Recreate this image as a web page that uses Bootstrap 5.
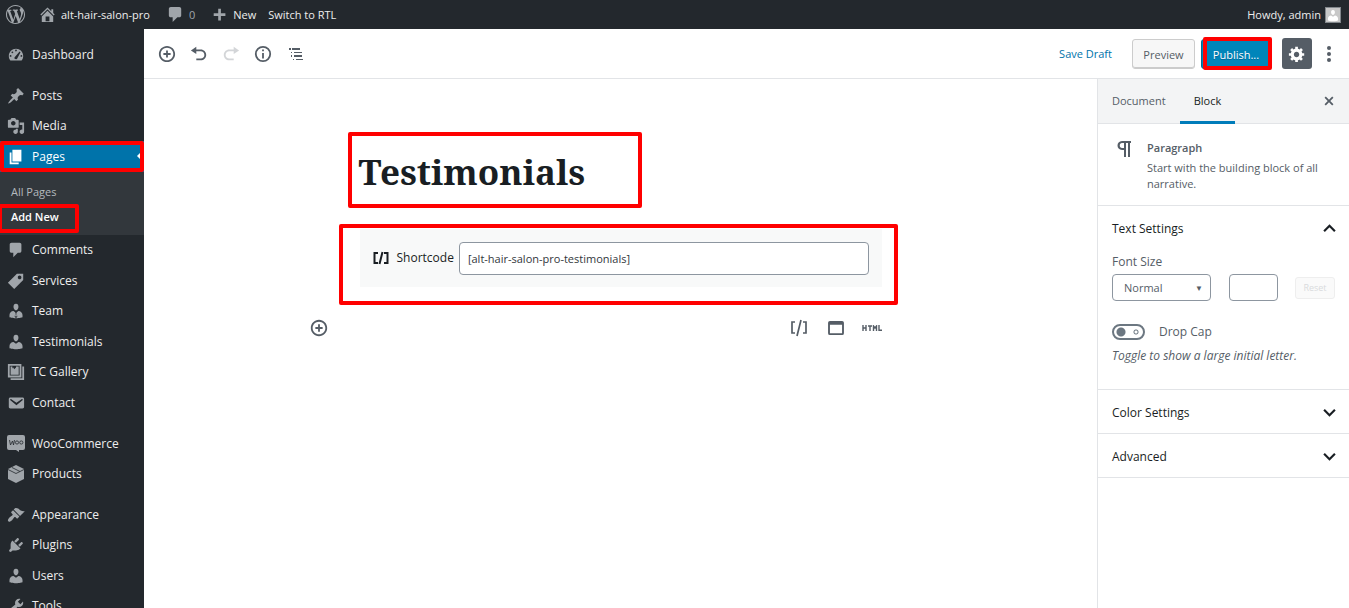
<!DOCTYPE html>
<html lang="en">
<head>
<meta charset="utf-8">
<meta name="viewport" content="width=device-width, initial-scale=1">
<title>Add New Page</title>
<link href="https://cdn.jsdelivr.net/npm/bootstrap@5.3.0/dist/css/bootstrap.min.css" rel="stylesheet">
<style>
  body { font: 12px/16px "Open Sans", "Noto Sans", sans-serif; color: #191e23; background: #fff; }
  a { text-decoration: none; }
  svg { fill: currentColor; flex: none; display: block; }
  button { border: 0; background: none; padding: 0; color: #555d66; }
  .fine { font-size: 11px; }

  .adminbar { height: 29px; background: #23282d; color: #eee; padding: 0 8px 0 5px; font-size: 11px; }
  .adminbar a { color: #eee; }
  .adminbar a.quiet, .adminbar svg { color: #a0a5aa; }
  .avatar { width: 16px; height: 16px; background: #c8c8c8; border: 1px solid #82878c; overflow: hidden; }
  .adminbar .avatar svg { color: #fff; }

  .side { width: 144px; background: #23282d; overflow: hidden; padding-top: 10px; flex: none; }
  .side ul { list-style: none; margin: 0 0 10px; padding: 0; }
  .side-link { display: flex; align-items: center; gap: 7px; height: 30px; padding-left: 7px; color: #eee; }
  .side li:nth-child(odd) > .side-link { height: 31px; }
  .side svg { color: #a0a5aa; }
  .side .side-link.current { background: #0073aa; color: #fff; position: relative; }
  .side .current svg { color: #fff; }
  .current::after { content: ""; position: absolute; right: 0; top: 8px; border: 7px solid transparent; border-right-color: #fff; }
  .side .submenu { background: #32373c; margin: 0; padding: 7px 0 6px; }
  .submenu a { display: flex; align-items: center; height: 25px; padding-left: 11px; color: #b4b9be; font-size: 11px; }
  .submenu a.here { color: #fff; font-weight: 600; position: relative; }

  /* red call-outs */
  .callout { border: 4px solid #f00; border-radius: 2px; }
  .callout-over { position: absolute; inset: 0; pointer-events: none; z-index: 2; }
  .callout-here { inset: 0 auto -4px -2px; width: 81px; }
  .callout-publish { inset: -3px -2px -2px 1px; }

  .edit-head { height: 50px; border-bottom: 1px solid #e2e4e7; padding: 0 11px 0 14px; }
  .edit-head svg { color: #555d66; }
  .tools { gap: 14px; }
  .head-btn { height: 30px; border-radius: 3px; font-size: 11px; padding-top: 2px; }
  .preview { width: 63px; border: 1px solid #ccc; background: #f7f7f7; box-shadow: inset 0 -1px 0 #ccc; margin: 0 6px 0 20px; }
  .publish { position: relative; width: 70px; background: #0085ba; color: #fff; border: 1px solid #006a95; text-shadow: 0 1px 0 #006799; margin-right: 11px; }
  .gear { width: 30px; height: 31px; background: #555d66; border-radius: 3px; }
  .edit-head .gear svg { color: #fff; }

  .column { width: 522px; max-width: 100%; margin: 53px auto 0; }
  .title-box { width: 294px; height: 76px; margin: 0 0 16px -12px; padding: 4px 0 0 7px; }
  .title-box h1 { font: bold 35px/50px "Noto Serif", "DejaVu Serif Condensed", "DejaVu Serif", serif; margin: 0; }
  .code-box { height: 81px; margin: 0 -16px 0 -21px; padding: 1px 12px 0 17px; }
  .code-block { height: 58px; background: #f8f9f9; padding: 0 13px; }
  .code-block label { margin: 0 5px 0 8px; }
  .code-block input { height: 33px; border: 1px solid #8d96a0; border-radius: 4px; padding: 0 8px; color: #32373c; min-width: 0; font-size: 11px; }
  .inserter { margin: 13px 0 0 -51px; color: #555d66; }
  .inserter .middle { margin: 0 18px 0 20px; }

  .panel-side { width: 252px; flex: none; border-left: 1px solid #e2e4e7; color: #555d66; }
  .tabs { height: 45px; background: #f3f4f5; border-bottom: 1px solid #e2e4e7; padding-right: 11px; }
  .tabs .tab { height: 45px; padding: 3px 14px 0; color: #555d66; border-bottom: 3px solid transparent; font-size: 11px; }
  .tabs .tab.on { color: #191e23; border-bottom-color: #007cba; }
  .about { height: 82px; border-bottom: 1px solid #e2e4e7; padding: 16px 12px 0 18px; gap: 15px; }
  .sect { border-bottom: 1px solid #e2e4e7; }
  .sect-toggle { width: 100%; height: 43px; padding: 2px 13px 0 14px; color: #191e23; }
  .sect-body { padding: 5px 14px 25px; }
  .field { border: 1px solid #8d96a0; border-radius: 4px; height: 27px; background: #fff; color: #555d66; }
  .size-pick { width: 99px; padding: 0 11px; appearance: none; font-size: 11px; }
  .size-wrap { position: relative; }
  .size-wrap span { position: absolute; right: 8px; top: 6px; font-size: 8px; pointer-events: none; }
  .size-num { width: 49px; }
  .reset { width: 40px; height: 22px; border: 1px solid #eee; border-radius: 3px; background: #fafafa; color: #d9dbdd; font-size: 9px; }
  .drop-row { margin: 23px 0 8px; gap: 14px; }
  .toggle { appearance: none; width: 33px; height: 16px; margin: 0; border: 2px solid #6c7781; border-radius: 8px;
    background: radial-gradient(circle at 7px 6px, #6c7781 4px, transparent 5px), radial-gradient(circle at 22px 6px, transparent 1px, #6c7781 2px, transparent 3px); }
</style>
</head>
<body class="vh-100 overflow-hidden d-flex flex-column">

<svg class="d-none">
  <symbol id="i-user" viewBox="0 0 20 20"><path d="M10 9.250c-2.270 0-2.730-3.440-2.730-3.440C7 4.020 7.820 2 9.970 2c2.160 0 2.980 2.020 2.710 3.810 0 0-.41 3.440-2.680 3.440zm0 2.570L12.720 10c2.390 0 4.520 2.330 4.520 4.530v2.490s-3.650 1.130-7.240 1.130c-3.650 0-7.240-1.130-7.240-1.130v-2.490c0-2.250 1.940-4.480 4.470-4.480z"/></symbol>
  <symbol id="i-comment" viewBox="0 0 20 20"><path d="M5 2h9c1.100 0 2 .9 2 2v7c0 1.100-.9 2-2 2h-2l-5 5v-5H5c-1.100 0-2-.9-2-2V4c0-1.100.9-2 2-2z"/></symbol>
  <symbol id="i-insert" viewBox="0 0 20 20"><path d="M10 1c-5 0-9 4-9 9s4 9 9 9 9-4 9-9-4-9-9-9zm0 16c-3.900 0-7-3.100-7-7s3.100-7 7-7 7 3.100 7 7-3.100 7-7 7zm1-11H9v3H6v2h3v3h2v-3h3V9h-3V6z"/></symbol>
  <symbol id="i-down" viewBox="0 0 12 12"><path d="M1 3.500l5 5 5-5" fill="none" stroke="currentColor" stroke-width="2"/></symbol>
</svg>

<header class="adminbar d-flex align-items-center flex-shrink-0">
  <a href="#" aria-label="WordPress"><svg width="21" height="21" viewBox="-1 -1 22 22"><path d="M20 10c0-5.510-4.490-10-10-10C4.480 0 0 4.490 0 10c0 5.520 4.480 10 10 10 5.510 0 10-4.480 10-10zM7.780 15.370L4.370 6.220c.55-.02 1.170-.08 1.170-.08.5-.06.44-1.130-.06-1.110 0 0-1.450.11-2.370.11-.18 0-.37 0-.58-.01C4.120 2.690 6.870 1.110 10 1.110c2.330 0 4.450.87 6.050 2.340-.68-.11-1.650.39-1.650 1.580 0 .74.45 1.360.9 2.100.35.610.55 1.360.55 2.460 0 1.490-1.400 5-1.400 5l-3.030-8.370c.54-.02.82-.17.82-.17.5-.05.44-1.250-.06-1.220 0 0-1.440.12-2.380.12-.87 0-2.330-.12-2.330-.12-.5-.03-.56 1.200-.06 1.220l.92.08 1.260 3.410zM17.410 10c.24-.64.74-1.870.43-4.250.7 1.290 1.050 2.710 1.050 4.250 0 3.290-1.730 6.240-4.400 7.780.97-2.590 1.940-5.200 2.920-7.780zM6.100 18.090C3.120 16.650 1.110 13.530 1.110 10c0-1.300.23-2.480.72-3.590C3.250 10.300 4.670 14.200 6.100 18.090zm4.030-6.630l2.580 6.980c-.86.29-1.760.45-2.710.45-.79 0-1.570-.11-2.290-.33.81-2.380 1.620-4.740 2.420-7.100z"/></svg></a>
  <a href="#" class="d-flex align-items-center ms-2 ps-1 gap-1"><svg width="19" height="19" viewBox="0 0 20 20"><path d="M16 8.500l1.530 1.530-1.060 1.060L10 4.600l-6.470 6.490-1.060-1.060L10 2.500l4 4v-2h2v4zm-6-2.460l6 5.990V18H4v-5.970zM12 17v-5H8v5h4z"/></svg>alt-hair-salon-pro</a>
  <a href="#" class="quiet d-flex align-items-center ms-3 gap-1"><svg width="19" height="19"><use href="#i-comment"/></svg>0</a>
  <a href="#" class="d-flex align-items-center ms-3 gap-1"><svg width="18" height="18" viewBox="1 -1 20 20"><path d="M17 7v3h-5v5H9v-5H4V7h5V2h3v5h5z"/></svg>New</a>
  <a href="#" class="ms-2 ps-1">Switch to RTL</a>
  <a href="#" class="d-flex align-items-center ms-auto gap-1">Howdy, admin <span class="avatar"><svg width="14" height="15"><use href="#i-user"/></svg></span></a>
</header>

<div class="d-flex flex-grow-1 overflow-hidden">
  <nav class="side" aria-label="Main menu">
    <ul>
      <li><a href="#" class="side-link"><svg width="18" height="18" viewBox="0 0 20 20"><path fill-rule="evenodd" d="M3.760 16h12.480c1.100-1.370 1.760-3.110 1.760-5 0-4.420-3.580-8-8-8s-8 3.580-8 8c0 1.890.66 3.630 1.760 5zM10 4c.55 0 1 .45 1 1s-.45 1-1 1-1-.45-1-1 .45-1 1-1zM6 6c.55 0 1 .45 1 1s-.45 1-1 1-1-.45-1-1 .45-1 1-1zm8 0l1 1-3.500 6.500c-.4 1.500-3 1.500-3.300-.2 0-.8.5-1.300 1-1.700zM4 10c.55 0 1 .45 1 1s-.45 1-1 1-1-.45-1-1 .45-1 1-1zm12 0c.55 0 1 .45 1 1s-.45 1-1 1-1-.45-1-1 .45-1 1-1z"/></svg>Dashboard</a></li>
    </ul>
    <ul>
      <li><a href="#" class="side-link"><svg width="18" height="18" viewBox="0 0 20 20"><path d="M10.440 3.020l1.820-1.820 6.360 6.350-1.830 1.820c-1.050-.68-2.480-.57-3.410.36l-.75.75c-.92.930-1.040 2.350-.35 3.410l-1.830 1.820-2.410-2.410-2.800 2.790c-.42.420-3.380 2.710-3.800 2.290s1.860-3.390 2.280-3.810l2.790-2.790L4.100 9.360l1.830-1.820c1.050.69 2.480.57 3.400-.36l.75-.75c.93-.92 1.050-2.350.36-3.410z"/></svg>Posts</a></li>
      <li><a href="#" class="side-link"><svg width="18" height="18" viewBox="0 0 20 20"><path d="M13 11V4c0-.55-.45-1-1-1h-1.670L9 1H5L3.670 3H2c-.55 0-1 .45-1 1v7c0 .55.45 1 1 1h10c.55 0 1-.45 1-1zM7 4.500c1.380 0 2.500 1.120 2.500 2.500S8.380 9.500 7 9.500 4.500 8.380 4.500 7 5.620 4.500 7 4.500zM14 6h5v10.500c0 1.380-1.120 2.500-2.500 2.500S14 17.880 14 16.500s1.120-2.500 2.500-2.500c.17 0 .34.020.5.050V9h-3V6zm-4 8.050V13h2v3.500c0 1.380-1.120 2.500-2.500 2.500S7 17.880 7 16.500 8.120 14 9.500 14c.17 0 .34.020.5.050z"/></svg>Media</a></li>
      <li>
        <a href="#" class="side-link current"><svg width="18" height="18" viewBox="0 0 20 20"><path d="M6 15V2h10v13H6zm-1 1h8v2H3V5h2v11z"/></svg>Pages<span class="callout callout-over"></span></a>
        <ul class="submenu">
          <li><a href="#">All Pages</a></li>
          <li><a href="#" class="here">Add New<span class="callout callout-over callout-here"></span></a></li>
        </ul>
      </li>
      <li><a href="#" class="side-link"><svg width="18" height="18"><use href="#i-comment"/></svg>Comments</a></li>
      <li><a href="#" class="side-link"><svg width="18" height="18" viewBox="0 0 20 20"><path fill-rule="evenodd" d="M11 2h7v7L8 19l-7-7zm3 6c1.100 0 2-.9 2-2s-.9-2-2-2-2 .9-2 2 .9 2 2 2z"/></svg>Services</a></li>
      <li><a href="#" class="side-link"><svg width="18" height="18" viewBox="0 0 20 20"><use href="#i-user"/><path fill="#23282d" d="M8.500 10h3l-1 2 1 4-1.500 2-1.500-2 1-4z"/><path d="M9.500 12.500h1l.5 3-1 1-1-1z"/></svg>Team</a></li>
      <li><a href="#" class="side-link"><svg width="18" height="18"><use href="#i-user"/></svg>Testimonials</a></li>
      <li><a href="#" class="side-link"><svg width="18" height="18" viewBox="0 0 20 20"><path fill-rule="evenodd" d="M1 1h15v15H1zm2 2v11h11V3zM4 4h2v2l1-1 1 2 2-2V4h3v9H4zM17 4h2v15H4v-2h13z"/></svg>TC Gallery</a></li>
      <li><a href="#" class="side-link"><svg width="18" height="18" viewBox="0 0 20 20"><path d="M3.870 4h13.250C18.370 4 19 4.590 19 5.790v8.420c0 1.190-.63 1.790-1.880 1.790H3.870C2.620 16 2 15.400 2 14.210V5.790C2 4.590 2.620 4 3.870 4zm6.620 8.600l6.740-5.530c.24-.2.43-.66.13-1.070-.29-.41-.82-.42-1.170-.17l-5.700 3.860L4.800 5.830c-.35-.25-.88-.24-1.170.17-.3.41-.11.87.13 1.070z"/></svg>Contact</a></li>
    </ul>
    <ul>
      <li><a href="#" class="side-link"><svg width="18" height="20" viewBox="0 0 18 20"><path d="M2 1h14q2 0 2 2v11q0 2-2 2h-4v2l-3-2H2q-2 0-2-2V3q0-2 2-2z"/><g fill="none" stroke="#23282d" stroke-width=".8"><path d="M2.500 6l1 5 2-4 1 4 1-5"/><circle cx="10" cy="8.500" r="1.600"/><circle cx="14.300" cy="8.500" r="1.600"/></g></svg>WooCommerce</a></li>
      <li><a href="#" class="side-link"><svg width="18" height="18" viewBox="0 0 18 18"><path d="M9 0l8 4v10l-8 4-8-4V4z"/><path d="M1 4.500l8 4 8-4M5 2.500l8 4" fill="none" stroke="#23282d" stroke-width=".8"/></svg>Products</a></li>
    </ul>
    <ul>
      <li><a href="#" class="side-link"><svg width="18" height="18" viewBox="0 0 20 20"><path d="M14.480 11.060L7.410 3.990l1.500-1.500c.5-.56 2.300-.47 3.510.32 1.210.8 1.430 1.280 2.910 2.100 1.180.64 2.450 1.260 4.450.85zm-.71.71L6.700 4.700 4.930 6.470c-.39.39-.39 1.020 0 1.410l1.060 1.060c.39.39.39 1.030 0 1.420-.6.6-1.430 1.110-2.210 1.690-.35.26-.7.53-1.010.84C1.430 14.230.4 16.080 1.400 17.070c.99 1 2.840-.03 4.180-1.360.31-.31.58-.66.85-1.020.57-.78 1.080-1.610 1.690-2.210.39-.39 1.020-.39 1.410 0l1.060 1.060c.39.39 1.020.39 1.410 0z"/></svg>Appearance</a></li>
      <li><a href="#" class="side-link"><svg width="18" height="18" viewBox="0 0 20 20"><path d="M13.110 4.360L9.870 7.600 8 5.730l3.240-3.240c.35-.34 1.050-.2 1.560.32.52.51.66 1.210.31 1.550zm-8 1.770l.91-1.120 9.010 9.010-1.190.84c-.71.710-2.630 1.160-3.820 1.160H6.140L4.900 17.260c-.59.59-1.540.59-2.120 0-.59-.58-.59-1.530 0-2.120l1.240-1.240v-3.880c0-1.130.4-3.190 1.090-3.890zm7.260 3.970l3.240-3.240c.34-.35 1.040-.21 1.550.31.52.51.66 1.210.31 1.550l-3.240 3.250z"/></svg>Plugins</a></li>
      <li><a href="#" class="side-link"><svg width="18" height="18"><use href="#i-user"/></svg>Users</a></li>
      <li><a href="#" class="side-link"><svg width="18" height="18" viewBox="0 0 20 20"><path d="M16.680 9.770c-1.340 1.340-3.300 1.670-4.950.99l-5.410 6.520c-.99.99-2.590.99-3.580 0s-.99-2.590 0-3.570l6.520-5.420c-.68-1.650-.35-3.610.99-4.950 1.280-1.280 3.120-1.620 4.720-1.060l-2.890 2.890 2.820 2.820 2.860-2.870c.53 1.580.18 3.390-1.080 4.650z"/></svg>Tools</a></li>
    </ul>
  </nav>

  <div class="flex-grow-1 d-flex flex-column overflow-hidden">
    <div class="edit-head d-flex align-items-center flex-shrink-0">
      <div class="tools d-flex align-items-center">
        <button type="button" aria-label="Add block"><svg width="18" height="18" viewBox="0 0 20 20"><use href="#i-insert"/></svg></button>
        <button type="button" aria-label="Undo"><svg width="18" height="18" viewBox="0 0 20 20"><path d="M12 5H7V2L1 6l6 4V7h5c2.200 0 4 1.800 4 4s-1.800 4-4 4H7v2h5c3.300 0 6-2.700 6-6s-2.700-6-6-6z"/></svg></button>
        <button type="button" aria-label="Redo" class="opacity-25" disabled><svg width="18" height="18" viewBox="0 0 20 20"><path d="M8 5h5V2l6 4-6 4V7H8c-2.200 0-4 1.800-4 4s1.800 4 4 4h5v2H8c-3.300 0-6-2.700-6-6s2.700-6 6-6z"/></svg></button>
        <button type="button" aria-label="Content structure"><svg width="18" height="18" viewBox="0 0 20 20"><circle cx="10" cy="10" r="8" fill="none" stroke="currentColor" stroke-width="2"/><path d="M9 5h2v2H9zM9 9h2v6H9z"/></svg></button>
        <button type="button" aria-label="Block navigation"><svg width="18" height="14" viewBox="-3 0 18 14"><path d="M0 1h2v2H0zM3 1h8v2H3zM2 5h1v1H2zM5 5h8v1H5zM2 8h1v2H2zM5 8h8v2H5zM4 12h1v1H4zM7 12h7v1H7z"/></svg></button>
      </div>
      <div class="d-flex align-items-center ms-auto">
        <a href="#" class="fine" style="color:#0073aa">Save Draft</a>
        <button type="button" class="head-btn preview">Preview</button>
        <button type="button" class="head-btn publish">Publish...<span class="callout callout-over callout-publish"></span></button>
        <button type="button" class="gear d-flex align-items-center justify-content-center" aria-label="Settings"><svg width="18" height="18" viewBox="0 0 20 20"><path fill-rule="evenodd" d="M18 12h-2.180c-.17.7-.44 1.350-.81 1.930l1.540 1.540-2.100 2.100-1.540-1.540c-.58.36-1.230.63-1.910.79V19H8v-2.180c-.68-.16-1.330-.43-1.910-.79l-1.540 1.540-2.120-2.120 1.540-1.540c-.36-.58-.63-1.230-.79-1.910H1V9.030h2.170c.16-.7.44-1.350.8-1.940L2.430 5.550l2.100-2.100 1.540 1.540c.58-.37 1.240-.64 1.930-.81V2h3v2.180c.68.16 1.330.43 1.910.79l1.540-1.540 2.120 2.120-1.540 1.540c.36.59.64 1.240.8 1.940H18V12zm-8.500 1.500c1.660 0 3-1.340 3-3s-1.340-3-3-3-3 1.340-3 3 1.340 3 3 3z"/></svg></button>
        <button type="button" class="ms-2" aria-label="More"><svg width="18" height="18" viewBox="0 0 18 18"><circle cx="9" cy="3" r="2"/><circle cx="9" cy="9" r="2"/><circle cx="9" cy="15" r="2"/></svg></button>
      </div>
    </div>

    <div class="d-flex flex-grow-1 overflow-hidden">
      <main class="flex-grow-1">
        <div class="column">
          <div class="title-box callout d-flex align-items-center"><h1>Testimonials</h1></div>
          <div class="code-box callout">
            <div class="code-block d-flex align-items-center">
              <svg width="16" height="14" viewBox="0 0 16 14"><path d="M5 2H1.500v10H5M11 2h3.500v10H11M9.500 1l-3 12" fill="none" stroke="currentColor" stroke-width="2"/></svg>
              <label for="code">Shortcode</label>
              <input id="code" type="text" class="flex-grow-1" value="[alt-hair-salon-pro-testimonials]">
            </div>
          </div>
          <div class="inserter d-flex align-items-center">
            <button type="button" aria-label="Add block"><svg width="20" height="20" viewBox="-1 -1 22 22"><use href="#i-insert" width="20" height="20"/></svg></button>
            <button type="button" class="ms-auto" aria-label="Shortcode"><svg width="18" height="18" viewBox="0 0 18 18"><path d="M5 3H2v11h3M13 3h3v11h-3M11 1L7 17" fill="none" stroke="currentColor" stroke-width="1.700"/></svg></button>
            <button type="button" class="middle" aria-label="Classic"><svg width="16" height="14" viewBox="0 0 17 15"><path fill-rule="evenodd" d="M2 0h13q2 0 2 2v11q0 2-2 2H2q-2 0-2-2V2q0-2 2-2zm0 4v9h13V4z"/></svg></button>
            <button type="button" aria-label="Custom HTML"><svg width="20" height="7" viewBox="0 0 20 7"><path d="M1 0v6M4 0v6M1 3h3M6 1h4M8 1v5M11.500 6V1l1.500 2 1.500-2v5M17 0v5.300h3" fill="none" stroke="currentColor" stroke-width="1.400"/></svg></button>
          </div>
        </div>
      </main>

      <aside class="panel-side">
        <div class="tabs d-flex align-items-center">
          <button type="button" class="tab">Document</button>
          <button type="button" class="tab on">Block</button>
          <button type="button" class="ms-auto" aria-label="Close settings"><svg width="18" height="18" viewBox="0 0 20 20"><path d="M14.950 6.460L11.410 10l3.540 3.540-1.410 1.410L10 11.420l-3.530 3.530-1.420-1.420L8.580 10 5.050 6.470l1.420-1.420L10 8.580l3.540-3.530z"/></svg></button>
        </div>
        <div class="about fine d-flex">
          <svg width="16" height="18" viewBox="0 0 16 18"><path d="M6 1h9v2h-1v14h-2V3h-2v14H8V10H6C0 10 0 1 6 1zm0 2c-3 0-3 5 0 5h2V3z" fill-rule="evenodd"/></svg>
          <div><div class="fw-semibold mb-1">Paragraph</div><div>Start with the building block of all narrative.</div></div>
        </div>
        <section class="sect">
          <button type="button" class="sect-toggle d-flex align-items-center justify-content-between">Text Settings<svg width="13" height="13" viewBox="0 0 12 12"><path d="M1 8.500l5-5 5 5" fill="none" stroke="currentColor" stroke-width="2"/></svg></button>
          <div class="sect-body">
            <label for="size" class="d-block mb-1">Font Size</label>
            <div class="d-flex align-items-center justify-content-between">
              <div class="size-wrap"><select id="size" class="field size-pick"><option>Normal</option></select><span>▼</span></div>
              <input type="text" class="field size-num" aria-label="Custom size">
              <button type="button" class="reset" disabled>Reset</button>
            </div>
            <div class="drop-row d-flex align-items-center"><input type="checkbox" role="switch" class="toggle" id="drop"><label for="drop">Drop Cap</label></div>
            <em>Toggle to show a large initial letter.</em>
          </div>
        </section>
        <section class="sect"><button type="button" class="sect-toggle d-flex align-items-center justify-content-between">Color Settings<svg width="13" height="13"><use href="#i-down"/></svg></button></section>
        <section class="sect"><button type="button" class="sect-toggle d-flex align-items-center justify-content-between">Advanced<svg width="13" height="13"><use href="#i-down"/></svg></button></section>
      </aside>
    </div>
  </div>
</div>
<script src="https://cdn.jsdelivr.net/npm/bootstrap@5.3.0/dist/js/bootstrap.bundle.min.js"></script>
</body>
</html>
